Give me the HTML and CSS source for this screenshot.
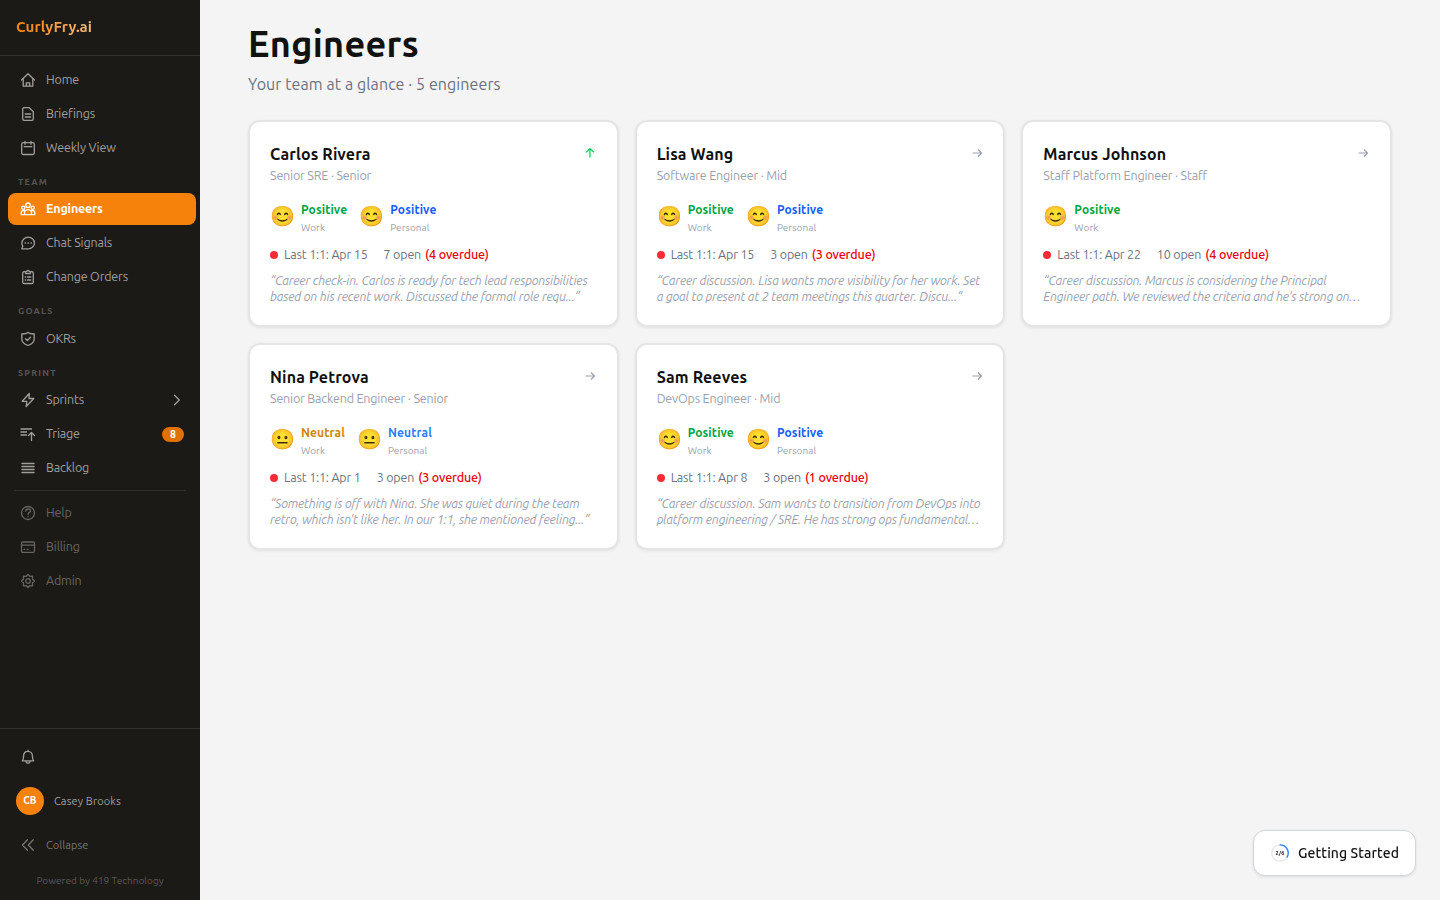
FILE: index.html
```html
<!DOCTYPE html>
<html lang="en">
<head>
  <meta charset="UTF-8">
  <meta name="viewport" content="width=device-width, initial-scale=1.0">
  <title>Engineers - CurlyFry.ai</title>
  <link rel="stylesheet" href="styles.css">
</head>
<body>
  <aside class="sidebar">
    <div class="logo"><span>CurlyFry.ai</span></div>
    <nav class="nav">
      <a class="nav-item"><svg viewBox="0 0 16 16"><path d="M1.5 8 8 1.8 14.5 8M3.2 6.8v7.4h9.6V6.8M6.3 14.2v-3.4h3.4v3.4"/></svg><span>Home</span></a>
      <a class="nav-item"><svg viewBox="0 0 16 16"><path d="M4 1.7h5.2L13.3 5.7V13a1.3 1.3 0 0 1-1.3 1.3H4A1.3 1.3 0 0 1 2.7 13V3A1.3 1.3 0 0 1 4 1.7zM5.3 8h5.4M5.3 11h5.4"/></svg><span>Briefings</span></a>
      <a class="nav-item"><svg viewBox="0 0 16 16"><rect x="1.7" y="2.7" width="12.6" height="11.8" rx="1.5"/><path d="M5 1.3v3M11 1.3v3M4.3 6.7h7.4"/></svg><span>Weekly View</span></a>

      <div class="nav-label">TEAM</div>
      <a class="nav-item active"><svg viewBox="0 0 16 16"><circle cx="8" cy="4.2" r="2.2"/><circle cx="3.3" cy="6.7" r="1.6"/><circle cx="12.7" cy="6.7" r="1.6"/><path d="M4.5 13.7v-1.5a3.5 3.5 0 0 1 7 0v1.5zM4.5 13.7H1.2v-2.4q0-1.7 3.6-2M11.5 13.7h3.3v-2.4q0-1.7-3.6-2"/></svg><span>Engineers</span></a>
      <a class="nav-item"><svg viewBox="0 0 16 16"><path d="M8.2 2.2c3.5 0 6.3 2.6 6.3 5.8s-2.8 5.8-6.3 5.8H1.8l1-2.7A5.6 5.6 0 0 1 1.9 8c0-3.2 2.8-5.8 6.3-5.8z"/><path d="M5.1 8h.4M8 8h.4M10.9 8h.4"/></svg><span>Chat Signals</span></a>
      <a class="nav-item"><svg viewBox="0 0 16 16"><path d="M5.5 2.7H4A1.3 1.3 0 0 0 2.7 4v9.2A1.3 1.3 0 0 0 4 14.5h8a1.3 1.3 0 0 0 1.3-1.3V4A1.3 1.3 0 0 0 12 2.7h-1.5"/><path d="M5.5 4.5V2.8c1 0 1.3-1.3 2.5-1.3s1.5 1.3 2.5 1.3v1.7zM5.2 8h.5M7.5 8h3.3M5.2 11h.5M7.5 11h3.3"/></svg><span>Change Orders</span></a>

      <div class="nav-label">GOALS</div>
      <a class="nav-item"><svg viewBox="0 0 16 16"><path d="M8 1.5c1.8 1.3 3.8 1.6 6.2 1.5v4.7c0 3.3-2.4 5.5-6.2 6.8-3.8-1.3-6.2-3.5-6.2-6.8V3C4.2 3.1 6.2 2.8 8 1.5z"/><path d="M5.5 7.8l1.8 1.7 3.2-3.2"/></svg><span>OKRs</span></a>

      <div class="nav-label">SPRINT</div>
      <a class="nav-item"><svg viewBox="0 0 16 16"><path d="M9.3 1.5 2.2 9.3h4.6l-.6 5.2 7.6-8H9z"/></svg><span>Sprints</span><svg class="chevron" viewBox="0 0 16 16"><path d="M5.5 3.3 10.3 8l-4.8 4.7"/></svg></a>
      <a class="nav-item"><svg viewBox="0 0 16 16"><path d="M1 3h10.5M1 6h5.5M1 9h5.5M11.5 14.5V6.7M8.5 9.5l3-3 3 3"/></svg><span>Triage</span><b class="badge">8</b></a>
      <a class="nav-item"><svg class="lines" viewBox="0 0 16 16"><path d="M2 3.5h12M2 6.5h12M2 9.5h12M2 12.5h12"/></svg><span>Backlog</span></a>

      <div class="nav-divider"></div>
      <a class="nav-item dim"><svg viewBox="0 0 16 16"><circle cx="8" cy="8" r="6.5"/><path d="M5.7 6.3c0-1.5 1-2.3 2.4-2.3s2.4.8 2.4 2c0 1.6-2.4 1.7-2.4 3.3M8.1 11.4v.3"/></svg><span>Help</span></a>
      <a class="nav-item dim"><svg viewBox="0 0 16 16"><rect x="1.5" y="3" width="13" height="10.3" rx="1.3"/><path d="M1.5 6.2h13M4 10.3h.8M7.3 10.3h.8"/></svg><span>Billing</span></a>
      <a class="nav-item dim"><svg viewBox="0 0 16 16"><path d="M8 1.5l1.8 1.8 2.8-.1-.1 2.9L14.5 8l-2 1.9.1 2.9-2.8-.1L8 14.5l-1.8-1.8-2.8.1.1-2.9L1.5 8l2-1.9-.1-2.9 2.8.1z"/><circle cx="8" cy="8" r="2.3"/></svg><span>Admin</span></a>
    </nav>

    <div class="sidebar-footer">
      <a class="nav-item"><svg viewBox="0 0 16 16"><path d="M2.3 11.8h11.4c-1.2-1-1.3-2.3-1.3-4.8 0-2.8-1.7-4.7-4.4-4.7S3.6 4.2 3.6 7c0 2.5-.1 3.8-1.3 4.8zM8 1.2v1M5.8 12c.2 1.5 1 2.2 2.2 2.2s2-.7 2.2-2.2"/></svg></a>
      <div class="user"><div class="avatar">CB</div><span>Casey Brooks</span></div>
      <a class="nav-item collapse"><svg viewBox="0 0 16 16"><path d="M7.5 2.7 2.5 8l5 5.3M13.3 2.7 8.3 8l5 5.3"/></svg><span>Collapse</span></a>
      <p class="powered">Powered by 419 Technology</p>
    </div>
  </aside>

  <main class="content">
    <h1>Engineers</h1>
    <p class="subtitle">Your team at a glance · 5 engineers</p>

    <div class="grid">
      <div class="card">
        <div class="card-head"><h2>Carlos Rivera</h2><svg class="trend up" viewBox="0 0 12 12"><path d="M6 10.5V1.7M2 5.4l4-3.9 4 3.9"/></svg></div>
        <p class="role">Senior SRE · Senior</p>
        <div class="moods">
          <div class="mood"><span class="emoji">😊</span><div><b class="green">Positive</b><small>Work</small></div></div>
          <div class="mood"><span class="emoji">😊</span><div><b class="blue">Positive</b><small>Personal</small></div></div>
        </div>
        <div class="meta"><i class="dot"></i><span class="last">Last 1:1: Apr 15</span><span>7 open</span><b>(4 overdue)</b></div>
        <p class="note">“Career check-in. Carlos is ready for tech lead responsibilities<br>based on his recent work. Discussed the formal role requ...”</p>
      </div>
      <div class="card">
        <div class="card-head"><h2>Lisa Wang</h2><svg class="trend" viewBox="0 0 12 12"><path d="M1.5 6h9M7 2.5 10.5 6 7 9.5"/></svg></div>
        <p class="role">Software Engineer · Mid</p>
        <div class="moods">
          <div class="mood"><span class="emoji">😊</span><div><b class="green">Positive</b><small>Work</small></div></div>
          <div class="mood"><span class="emoji">😊</span><div><b class="blue">Positive</b><small>Personal</small></div></div>
        </div>
        <div class="meta"><i class="dot"></i><span class="last">Last 1:1: Apr 15</span><span>3 open</span><b>(3 overdue)</b></div>
        <p class="note">“Career discussion. Lisa wants more visibility for her work. Set<br>a goal to present at 2 team meetings this quarter. Discu...”</p>
      </div>
      <div class="card">
        <div class="card-head"><h2>Marcus Johnson</h2><svg class="trend" viewBox="0 0 12 12"><path d="M1.5 6h9M7 2.5 10.5 6 7 9.5"/></svg></div>
        <p class="role">Staff Platform Engineer · Staff</p>
        <div class="moods">
          <div class="mood"><span class="emoji">😊</span><div><b class="green">Positive</b><small>Work</small></div></div>
        </div>
        <div class="meta"><i class="dot"></i><span class="last">Last 1:1: Apr 22</span><span>10 open</span><b>(4 overdue)</b></div>
        <p class="note">“Career discussion. Marcus is considering the Principal<br>Engineer path. We reviewed the criteria and he's strong on…</p>
      </div>
      <div class="card">
        <div class="card-head"><h2>Nina Petrova</h2><svg class="trend" viewBox="0 0 12 12"><path d="M1.5 6h9M7 2.5 10.5 6 7 9.5"/></svg></div>
        <p class="role">Senior Backend Engineer · Senior</p>
        <div class="moods">
          <div class="mood"><span class="emoji">😐</span><div><b class="amber">Neutral</b><small>Work</small></div></div>
          <div class="mood"><span class="emoji">😐</span><div><b class="sky">Neutral</b><small>Personal</small></div></div>
        </div>
        <div class="meta"><i class="dot"></i><span class="last">Last 1:1: Apr 1</span><span>3 open</span><b>(3 overdue)</b></div>
        <p class="note">“Something is off with Nina. She was quiet during the team<br>retro, which isn't like her. In our 1:1, she mentioned feeling...”</p>
      </div>
      <div class="card">
        <div class="card-head"><h2>Sam Reeves</h2><svg class="trend" viewBox="0 0 12 12"><path d="M1.5 6h9M7 2.5 10.5 6 7 9.5"/></svg></div>
        <p class="role">DevOps Engineer · Mid</p>
        <div class="moods">
          <div class="mood"><span class="emoji">😊</span><div><b class="green">Positive</b><small>Work</small></div></div>
          <div class="mood"><span class="emoji">😊</span><div><b class="blue">Positive</b><small>Personal</small></div></div>
        </div>
        <div class="meta"><i class="dot"></i><span class="last">Last 1:1: Apr 8</span><span>3 open</span><b>(1 overdue)</b></div>
        <p class="note">“Career discussion. Sam wants to transition from DevOps into<br>platform engineering / SRE. He has strong ops fundamental…</p>
      </div>
    </div>
  </main>

  <button class="getting-started">
    <svg viewBox="0 0 20 20"><circle class="ring" cx="10" cy="10" r="8.2"/><path class="ring-done" d="M10 1.8a8.2 8.2 0 0 1 7.1 12.3"/><text x="10" y="12">2/6</text></svg>
    <span>Getting Started</span>
  </button>
</body>
</html>
```

FILE: styles.css
```css
* {
  box-sizing: border-box;
}
body {
  margin: 0;
  display: flex;
  height: 100vh;
  overflow: hidden;
  background: #f4f4f4;
  color: #111;
  font-family: Ubuntu, "Noto Sans", sans-serif;
  font-size: 12.5px;
  letter-spacing: -.17px;
}
h1, h2, p {
  margin: 0;
}

.sidebar {
  width: 200px;
  flex-shrink: 0;
  display: flex;
  flex-direction: column;
  background: #1b1a17;
  color: #a09f9d;
}
.logo {
  height: 56px;
  padding: 0 16px;
  border-bottom: 1px solid #31302e;
  font-size: 15px;
  font-weight: 700;
  line-height: 54px;
  letter-spacing: .15px;
}
.logo span {
  background: linear-gradient(90deg, #f6820c, #fdba74);
  background-clip: text;
  color: transparent;
}
.nav {
  flex: 1;
  display: flex;
  flex-direction: column;
  gap: 2px;
  padding: 7.5px 4px 0 8px;
}
.nav-item {
  display: flex;
  align-items: center;
  gap: 10px;
  height: 32px;
  padding: 0 12px;
  border-radius: 8px;
  line-height: 18px;
}
.nav span {
  padding-bottom: 2px;
}
.nav-item svg {
  width: 16px;
  height: 16px;
  flex-shrink: 0;
}
svg {
  fill: none;
  stroke: currentColor;
  stroke-width: 1.3;
  stroke-linejoin: round;
  stroke-linecap: round;
}
.nav-item.active {
  background: #f6820c;
  color: #fff;
  font-weight: 700;
}
.nav-item.dim {
  color: #666563;
}
.nav-item .lines {
  stroke-width: 1.5;
}
.nav-item .chevron {
  margin-left: auto;
  margin-right: -1px;
}
.nav-label {
  height: 25.5px;
  padding: 7px 10px 0;
  color: #575553;
  font-size: 9px;
  font-weight: 700;
  letter-spacing: 1.2px;
  line-height: 18px;
}
.badge {
  margin-left: auto;
  width: 22px;
  height: 15px;
  border-radius: 8px;
  background: #e17100;
  color: #fff;
  font-size: 10.5px;
  line-height: 15px;
  text-align: center;
}
.nav-divider {
  height: 1px;
  margin: 4px 10px 4px 6px;
  background: #31302e;
}

.sidebar-footer {
  height: 172px;
  border-top: 1px solid #31302e;
  padding: 12px 8px 0;
}
.user {
  display: flex;
  align-items: center;
  gap: 10px;
  padding: 14px 8px;
  font-size: 11px;
  letter-spacing: .12px;
}
.avatar {
  width: 28px;
  height: 28px;
  border-radius: 50%;
  background: #f6820c;
  color: #fff;
  font-size: 10px;
  font-weight: 700;
  line-height: 28px;
  text-align: center;
}
.collapse {
  color: #767573;
  font-size: 11px;
  letter-spacing: .06px;
}
.powered {
  margin-top: 12px;
  color: #5b5957;
  font-size: 10px;
  letter-spacing: .04px;
  line-height: 15px;
  text-align: center;
}

.content {
  flex: 1;
  padding: 22px 48px;
}
h1 {
  font-size: 36px;
  line-height: 44px;
  letter-spacing: .33px;
}
.subtitle {
  margin-top: 6px;
  color: #6a7282;
  font-size: 16px;
  line-height: 24px;
  letter-spacing: .09px;
}
.grid {
  display: grid;
  grid-template-columns: repeat(3, 1fr);
  gap: 16px;
  margin-top: 24px;
}
.card {
  height: 207px;
  padding: 20px;
  background: #fff;
  border: 2px solid #e5e5e5;
  border-radius: 12px;
  box-shadow: 0 1px 3px rgba(0, 0, 0, .08);
}
.card-head {
  display: flex;
  justify-content: space-between;
}
h2 {
  font-size: 16px;
  line-height: 24px;
  letter-spacing: .13px;
}
.trend {
  width: 12px;
  height: 12px;
  margin: 5px .5px 0 0;
  color: #99a1af;
  stroke-width: 1.2;
  stroke-linecap: butt;
  stroke-linejoin: miter;
}
.trend.up {
  color: #00c950;
}
.role {
  color: #99a1af;
  line-height: 18px;
}
.moods {
  display: flex;
  gap: 12px;
  margin-top: 17px;
  height: 36px;
}
.mood {
  display: flex;
  gap: 6px;
}
.emoji {
  width: 25px;
  font-size: 20px;
  letter-spacing: 0;
  line-height: 30px;
}
.mood b {
  font-size: 12px;
  letter-spacing: .13px;
}
.mood b,
.mood small {
  display: block;
  line-height: 18px;
}
.mood small {
  color: #99a1af;
  font-size: 10px;
  letter-spacing: .06px;
}
.green { color: #00a63e; }
.blue { color: #155dfc; }
.amber { color: #d08700; }
.sky { color: #2b7fff; }
.meta {
  display: flex;
  align-items: center;
  height: 16px;
  margin-top: 10px;
  color: #6a7282;
  line-height: 16px;
}
.meta span,
.meta b {
  padding-bottom: 2px;
}
.dot {
  width: 8px;
  height: 8px;
  margin-right: 6px;
  border-radius: 50%;
  background: #fb2c36;
}
.last {
  margin-right: 16px;
}
.meta b {
  margin-left: 4px;
  color: #e7000b;
  font-weight: 500;
  letter-spacing: -.14px;
}
.note {
  margin-top: 9px;
  color: #99a1af;
  font-style: italic;
  letter-spacing: -.21px;
  line-height: 16px;
  white-space: nowrap;
}

.getting-started {
  position: fixed;
  right: 24px;
  bottom: 24px;
  width: 163px;
  height: 46px;
  display: flex;
  align-items: center;
  gap: 8px;
  padding: 0 16px;
  background: #fff;
  border: 1px solid #d1d5dc;
  border-radius: 12px;
  box-shadow: 0 1px 3px rgba(0, 0, 0, .1);
  color: #111;
  font: 500 14px Ubuntu, "Noto Sans", sans-serif;
  letter-spacing: .08px;
  white-space: nowrap;
}
.getting-started svg {
  width: 20px;
  height: 20px;
}
.ring {
  stroke: #e5e7eb;
}
.ring-done {
  stroke: #2b7fff;
}
.getting-started text {
  fill: #111;
  stroke: none;
  font-size: 5.5px;
  font-weight: 700;
  text-anchor: middle;
}
```
